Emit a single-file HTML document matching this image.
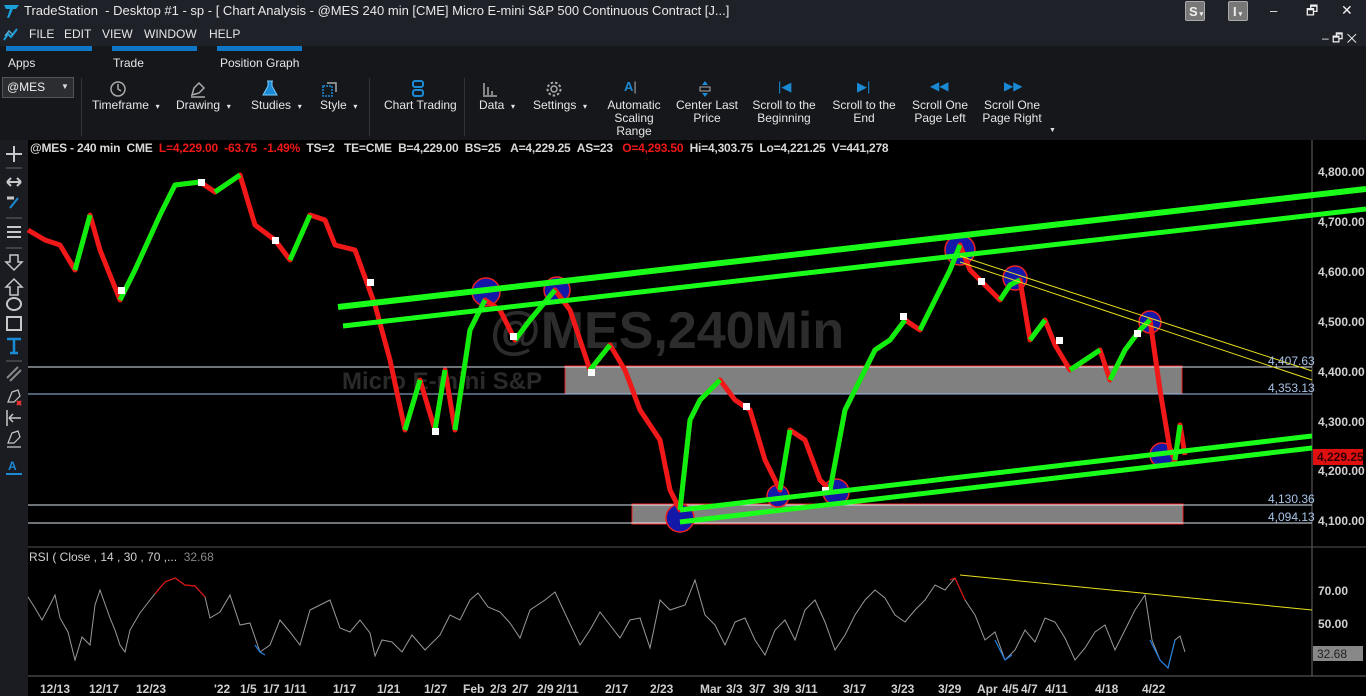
<!DOCTYPE html>
<html><head><meta charset="utf-8"><style>
*{margin:0;padding:0;box-sizing:border-box}
body{width:1366px;height:696px;overflow:hidden;background:#000;font-family:"Liberation Sans",sans-serif;position:relative;color:#ddd}
.a{position:absolute;white-space:nowrap}
#title{left:0;top:0;width:1366px;height:23px;background:#1f2129}
#menu{left:0;top:23px;width:1366px;height:23px;background:#1f2129}
#rib{left:0;top:46px;width:1366px;height:94px;background:#15171b}
.m{font-size:12px;color:#e6e6e6;top:27px}
.tab{height:5px;background:#0f78c6;top:46px}
.lbl{font-size:12px;color:#e6e6e6}
.rb{font-size:12px;color:#e6e6e6;text-align:center;line-height:13px}
.ax{font-size:12px;color:#d0d0d0;font-weight:bold;left:1318px}
.dt{font-size:12px;color:#d0d0d0;font-weight:bold;top:682px}
</style></head><body>
<div class="a" id="title"></div>
<svg class="a" style="left:2px;top:2px" width="20" height="18"><path d="M2 3 H17 L14 7 H11 L7 16 L5 16 L8 7 H4 Z" fill="#1aa0d8"/></svg>
<div class="a" style="left:24px;top:3px;font-size:13px;color:#e8e8e8">TradeStation &nbsp;- Desktop #1 - sp - [ Chart Analysis - @MES 240 min [CME] Micro E-mini S&amp;P 500 Continuous Contract [J...]</div>
<div class="a" style="left:1185px;top:1px;width:20px;height:20px;background:#777;border:1px solid #aaa;border-radius:2px;font-size:13px;font-weight:bold;color:#eee;padding:2px 0 0 3px">S<span style="font-size:7px"> ▾</span></div>
<div class="a" style="left:1228px;top:1px;width:20px;height:20px;background:#777;border:1px solid #aaa;border-radius:2px;font-size:13px;font-weight:bold;color:#eee;padding:2px 0 0 4px">I<span style="font-size:7px"> ▾</span></div>
<div class="a" style="left:1270px;top:3px;font-size:13px;color:#eee">‒</div>
<div class="a" style="left:1306px;top:2px;font-size:13px;color:#eee">🗗</div>
<div class="a" style="left:1341px;top:2px;font-size:14px;color:#eee">✕</div>
<div class="a" id="menu"></div>
<svg class="a" style="left:3px;top:26px" width="16" height="16"><path d="M1 14 L5 8 L8 11 L14 3" stroke="#1aa0d8" stroke-width="2" fill="none"/><path d="M2 10 L6 5 L10 9" stroke="#5ac" stroke-width="1.5" fill="none"/></svg>
<div class="a m" style="left:29px">FILE</div><div class="a m" style="left:64px">EDIT</div><div class="a m" style="left:102px">VIEW</div><div class="a m" style="left:144px">WINDOW</div><div class="a m" style="left:209px">HELP</div>
<div class="a" style="left:1322px;top:29px;font-size:12px;color:#eee">‒ 🗗 ✕</div>
<div class="a" id="rib"></div>
<div class="a tab" style="left:6px;width:86px"></div><div class="a tab" style="left:112px;width:85px"></div><div class="a tab" style="left:217px;width:85px"></div>
<div class="a lbl" style="left:8px;top:56px">Apps</div><div class="a lbl" style="left:113px;top:56px">Trade</div><div class="a lbl" style="left:220px;top:56px">Position Graph</div>
<div class="a" style="left:2px;top:77px;width:72px;height:21px;background:#2b2d31;border:1px solid #555;font-size:12px;color:#eee;padding:2px 4px">@MES</div>
<div class="a" style="left:61px;top:82px;font-size:8px;color:#ddd">▼</div>
<div class="a" style="left:81px;top:78px;width:1px;height:58px;background:#333"></div>
<div class="a" style="left:369px;top:78px;width:1px;height:58px;background:#333"></div>
<div class="a" style="left:464px;top:78px;width:1px;height:58px;background:#333"></div>
<svg class="a" style="left:109px;top:80px" width="18" height="18"><circle cx="9" cy="9" r="7" stroke="#aaa" stroke-width="1.5" fill="none"/><path d="M9 4V9L12 11" stroke="#aaa" stroke-width="1.5" fill="none"/></svg>
<svg class="a" style="left:189px;top:80px" width="18" height="18"><path d="M3 15 L5 8 L10 3 L15 8 L10 13Z M2 17H16" stroke="#aaa" stroke-width="1.5" fill="none"/></svg>
<svg class="a" style="left:261px;top:79px" width="18" height="18"><path d="M6 2H12M7 2V7L2 16H16L11 7V2" stroke="#7cf" stroke-width="1" fill="#1a8ad4"/></svg>
<svg class="a" style="left:321px;top:80px" width="18" height="18"><rect x="2" y="6" width="9" height="10" stroke="#1a8ad4" stroke-width="1.5" fill="none" stroke-dasharray="2 1"/><path d="M6 3H15V12" stroke="#aaa" stroke-width="1.5" fill="none"/></svg>
<svg class="a" style="left:411px;top:79px" width="14" height="20"><rect x="2" y="2" width="10" height="6" rx="2" stroke="#1a8ad4" stroke-width="2" fill="none"/><rect x="2" y="11" width="10" height="6" rx="2" stroke="#1a8ad4" stroke-width="2" fill="none"/></svg>
<svg class="a" style="left:481px;top:80px" width="18" height="18"><path d="M3 3V15M7 7V15M11 11V15M2 16H16" stroke="#aaa" stroke-width="1.5"/></svg>
<svg class="a" style="left:545px;top:80px" width="18" height="18"><circle cx="9" cy="9" r="3" stroke="#aaa" stroke-width="1.5" fill="none"/><circle cx="9" cy="9" r="6.5" stroke="#aaa" stroke-width="2" fill="none" stroke-dasharray="2.5 2"/></svg>
<div class="a" style="left:624px;top:79px;font-size:13px;font-weight:bold;color:#1a8ad4">A<span style="color:#aaa;font-weight:normal">|</span></div>
<svg class="a" style="left:698px;top:80px" width="14" height="18"><path d="M7 1L4 5H10Z M7 17L4 13H10Z" fill="#1a8ad4"/><rect x="2" y="7" width="10" height="4" stroke="#aaa" fill="none"/></svg>
<div class="a" style="left:778px;top:79px;font-size:13px;color:#1a8ad4">|◀</div>
<div class="a" style="left:857px;top:79px;font-size:13px;color:#1a8ad4">▶|</div>
<div class="a" style="left:930px;top:79px;font-size:12px;color:#1a8ad4">◀◀</div>
<div class="a" style="left:1004px;top:79px;font-size:12px;color:#1a8ad4">▶▶</div>
<div class="a rb" style="left:92px;top:99px">Timeframe &nbsp;<span style="font-size:8px">▾</span></div>
<div class="a rb" style="left:176px;top:99px">Drawing &nbsp;<span style="font-size:8px">▾</span></div>
<div class="a rb" style="left:251px;top:99px">Studies &nbsp;<span style="font-size:8px">▾</span></div>
<div class="a rb" style="left:320px;top:99px">Style &nbsp;<span style="font-size:8px">▾</span></div>
<div class="a rb" style="left:384px;top:99px">Chart Trading</div>
<div class="a rb" style="left:479px;top:99px">Data &nbsp;<span style="font-size:8px">▾</span></div>
<div class="a rb" style="left:533px;top:99px">Settings &nbsp;<span style="font-size:8px">▾</span></div>
<div class="a rb" style="left:605px;top:99px;width:58px">Automatic<br>Scaling<br>Range</div>
<div class="a rb" style="left:674px;top:99px;width:66px">Center Last<br>Price</div>
<div class="a rb" style="left:750px;top:99px;width:68px">Scroll to the<br>Beginning</div>
<div class="a rb" style="left:830px;top:99px;width:68px">Scroll to the<br>End</div>
<div class="a rb" style="left:909px;top:99px;width:62px">Scroll One<br>Page Left</div>
<div class="a rb" style="left:981px;top:99px;width:62px">Scroll One<br>Page Right</div>
<div class="a" style="left:1049px;top:127px;font-size:7px;color:#ddd">▼</div>

<!-- left toolbar -->
<div class="a" style="left:0;top:140px;width:28px;height:556px;background:#1a1c21"></div>
<svg class="a" style="left:0;top:140px" width="28" height="340">
<g stroke="#c8c8c8" stroke-width="2" fill="none">
<path d="M14 6V22M6 14H22"/>
<path d="M6 28H22M6 78H22M6 108H22M6 221H22" stroke="#666" stroke-width="1"/>
<path d="M7 42H21M7 42L11 38M7 42L11 46M21 42L17 38M21 42L17 46"/>
<path d="M7 58H14" stroke-width="3"/>
<path d="M18 58L10 68" stroke="#1a8ad4"/>
<path d="M7 87H21M7 92H21M7 97H21"/>
<path d="M10 115V122H6L14 130L22 122H18V115Z" stroke-width="1.5"/>
<path d="M10 155V147H6L14 139L22 147H18V155Z" stroke-width="1.5"/>
<ellipse cx="14" cy="164" rx="7" ry="6"/>
<rect x="7" y="177" width="14" height="13"/>
<path d="M7 199H21M14 199V213M10 213H18" stroke="#1a8ad4" stroke-width="2.5"/>
<path d="M7 238L18 227M10 241L21 230" stroke="#888"/>
<path d="M8 262L12 252L18 250L20 256L14 262Z" stroke-width="1.2"/>
<path d="M17 261L21 265M21 261L17 265" stroke="#e33"/>
<path d="M7 270V286M9 278H21M9 278L13 274M9 278L13 282" stroke-width="1.5"/>
<path d="M8 303L12 293L18 291L20 297L14 303ZM7 307H21" stroke-width="1.2"/>
<path d="M6 334H22" stroke="#1a8ad4"/>
</g>
<text x="8" y="330" font-size="12" font-weight="bold" fill="#1a8ad4" font-family="Liberation Sans">A</text>
</svg>

<!-- chart -->
<svg class="a" style="left:0;top:0" width="1366" height="696">
<g font-family="Liberation Sans" font-weight="bold" font-size="52">
<text x="490" y="348" fill="#2c2c2c">@MES,240Min</text>
<text x="342" y="389" fill="#2a2a2a" font-size="24">Micro E-mini S&amp;P</text>
</g>
<line x1="1312" y1="140" x2="1312" y2="676" stroke="#666"/>
<line x1="28" y1="547" x2="1366" y2="547" stroke="#555"/>
<line x1="28" y1="676" x2="1366" y2="676" stroke="#666"/>
<rect x="565" y="366" width="617" height="28" fill="#808080" stroke="#e22"/>
<rect x="632" y="504" width="551" height="20" fill="#808080" stroke="#e22"/>
<line x1="28" y1="367" x2="1312" y2="367" stroke="#dce6f0"/>
<line x1="28" y1="394" x2="1312" y2="394" stroke="#a0c0e8"/>
<line x1="28" y1="505" x2="1312" y2="505" stroke="#dce6f0"/>
<line x1="28" y1="523" x2="1312" y2="523" stroke="#dce6f0"/>
<g fill="#1418a8" stroke="#e22" stroke-width="1.5">
<circle cx="486" cy="292" r="14"/><circle cx="557" cy="290" r="13"/><circle cx="960" cy="250" r="15"/><circle cx="1015" cy="278" r="12"/><circle cx="1150" cy="322" r="11"/><circle cx="680" cy="518" r="14"/><circle cx="778" cy="496" r="11"/><circle cx="836" cy="492" r="13"/><circle cx="1162" cy="455" r="12"/>
</g>
<g fill="none" stroke-width="5" stroke-linejoin="round">
<path stroke="#f01818" d="M28 230L45 240L60 245L75 270L90 215L100 250L120 300L135 270L160 215L175 185L200 182L215 192L240 175L255 225L275 240L290 260L310 215L325 220L335 245L355 250L375 305L390 360L405 430L420 380L435 430L445 370L455 430L470 330L485 300L500 310L515 340L530 320L555 290L570 310L590 370L610 345L625 370L640 410L660 440L670 490L680 510L690 420L700 400L710 390L720 380L735 400L750 410L765 460L780 490L790 430L805 440L820 480L830 490L845 410L860 380L875 350L890 340L905 320L920 330L935 300L950 270L960 245L970 270L985 285L1000 300L1010 285L1020 280L1030 340L1045 320L1055 345L1070 370L1085 360L1100 350L1110 380L1125 350L1140 330L1150 320L1160 390L1170 450L1175 460L1180 425L1185 455"/>
<path stroke="#10ee10" d="M75 270L90 215M120 300L135 270L160 215L175 185L200 182M215 192L240 175M290 260L310 215M405 430L420 380M435 430L445 370M455 430L470 330L485 300M515 340L530 320L555 290M590 370L610 345M680 510L690 420L700 400L710 390L720 380M780 490L790 430M830 490L845 410L860 380L875 350L890 340L905 320M920 330L935 300L950 270L960 245M1000 300L1010 285L1020 280M1030 340L1045 320M1070 370L1085 360L1100 350M1110 380L1125 350L1140 330L1150 320M1175 460L1180 425"/>
</g>
<g fill="#fff"><rect x="118" y="287" width="7" height="7"/><rect x="198" y="179" width="7" height="7"/><rect x="367" y="279" width="7" height="7"/><rect x="272" y="237" width="7" height="7"/><rect x="432" y="428" width="7" height="7"/><rect x="510" y="333" width="7" height="7"/><rect x="588" y="369" width="7" height="7"/><rect x="743" y="403" width="7" height="7"/><rect x="822" y="487" width="7" height="7"/><rect x="900" y="313" width="7" height="7"/><rect x="978" y="278" width="7" height="7"/><rect x="1056" y="337" width="7" height="7"/><rect x="1134" y="330" width="7" height="7"/></g>
<line x1="338" y1="307" x2="1366" y2="189" stroke="#1aff1a" stroke-width="6"/>
<line x1="343" y1="326" x2="1366" y2="209" stroke="#1aff1a" stroke-width="5"/>
<line x1="680" y1="510" x2="1312" y2="436" stroke="#1aff1a" stroke-width="5"/>
<line x1="680" y1="522" x2="1312" y2="448" stroke="#1aff1a" stroke-width="5"/>
<line x1="960" y1="256" x2="1312" y2="371" stroke="#e8e020" stroke-width="1"/>
<line x1="960" y1="262" x2="1312" y2="380" stroke="#e8e020" stroke-width="1"/>
<line x1="960" y1="575" x2="1312" y2="610" stroke="#e8e020" stroke-width="1"/>
<polyline fill="none" stroke="#999" stroke-width="1" points="28,597 35,608 42,620 50,605 55,595 60,618 68,632 75,660 82,637 90,645 95,605 100,590 110,618 115,630 120,645 125,652 130,630 140,613 150,600 158,590 165,582 175,578 185,585 195,586 205,597 210,618 220,612 230,595 240,625 250,623 260,652 270,645 280,620 290,632 300,645 310,610 320,605 330,600 340,628 350,632 360,620 370,633 375,656 382,640 392,642 402,652 412,635 425,650 440,635 450,615 460,620 470,600 478,593 488,607 500,612 510,623 520,638 530,610 545,600 555,592 570,624 580,645 590,630 600,612 610,625 620,638 630,620 640,618 650,648 660,600 670,610 685,605 695,580 705,615 715,625 725,645 735,622 745,618 755,640 765,655 775,630 785,620 795,640 805,610 815,600 825,622 835,650 845,635 855,615 865,600 875,590 885,598 895,615 905,622 915,610 925,600 935,585 945,590 955,578 965,600 975,615 985,640 995,632 1005,660 1015,650 1025,630 1035,642 1045,618 1055,622 1065,638 1075,660 1085,648 1095,632 1105,625 1115,650 1125,630 1135,610 1145,595 1152,640 1160,660 1168,668 1175,640 1180,636 1185,652"/>
<polyline fill="none" stroke="#e01010" stroke-width="1.2" points="155,594 165,582 175,578 185,585 195,586 205,597"/>
<polyline fill="none" stroke="#e01010" stroke-width="1.2" points="950,580 955,578 965,600"/>
<polyline fill="none" stroke="#2080e0" stroke-width="1.2" points="255,645 260,652 265,655"/>
<polyline fill="none" stroke="#2080e0" stroke-width="1.2" points="1150,640 1160,660 1168,668 1175,640"/>
<polyline fill="none" stroke="#2080e0" stroke-width="1.2" points="995,640 1005,660 1012,655"/>
</svg>

<div class="a" style="left:30px;top:141px;font-size:12px;font-weight:bold;color:#d8d8d8;letter-spacing:-0.2px">@MES - 240 min &nbsp;CME &nbsp;<span style="color:#f01818">L=4,229.00 &nbsp;-63.75 &nbsp;-1.49%</span> &nbsp;TS=2 &nbsp;&nbsp;TE=CME &nbsp;B=4,229.00 &nbsp;BS=25 &nbsp;&nbsp;A=4,229.25 &nbsp;AS=23 &nbsp;&nbsp;<span style="color:#f01818">O=4,293.50</span> &nbsp;Hi=4,303.75 &nbsp;Lo=4,221.25 &nbsp;V=441,278</div>
<div class="a" style="left:29px;top:550px;font-size:12px;color:#d0d0d0">RSI ( Close , 14 , 30 , 70 ,... &nbsp;<span style="color:#888">32.68</span></div>

<div class="a ax" style="top:165px">4,800.00</div>
<div class="a ax" style="top:215px">4,700.00</div>
<div class="a ax" style="top:265px">4,600.00</div>
<div class="a ax" style="top:315px">4,500.00</div>
<div class="a ax" style="top:365px">4,400.00</div>
<div class="a ax" style="top:415px">4,300.00</div>
<div class="a ax" style="top:464px">4,200.00</div>
<div class="a ax" style="top:514px">4,100.00</div>
<div class="a ax" style="top:584px">70.00</div>
<div class="a ax" style="top:617px">50.00</div>
<div class="a" style="left:1313px;top:449px;width:50px;height:16px;background:#e01010;font-size:12px;color:#300;font-weight:bold;padding:1px 0 0 4px">4,229.25</div>
<div class="a" style="left:1313px;top:646px;width:50px;height:15px;background:#888;font-size:12px;color:#222;padding:1px 0 0 4px">32.68</div>
<div class="a" style="left:1268px;top:354px;font-size:12px;color:#a8c4e8">4,407.63</div>
<div class="a" style="left:1268px;top:381px;font-size:12px;color:#a8c4e8">4,353.13</div>
<div class="a" style="left:1268px;top:492px;font-size:12px;color:#a8c4e8">4,130.36</div>
<div class="a" style="left:1268px;top:510px;font-size:12px;color:#a8c4e8">4,094.13</div>

<div class="a dt" style="left:40px">12/13</div><div class="a dt" style="left:89px">12/17</div><div class="a dt" style="left:136px">12/23</div>
<div class="a dt" style="left:214px">'22</div><div class="a dt" style="left:240px">1/5</div><div class="a dt" style="left:263px">1/7</div><div class="a dt" style="left:284px">1/11</div>
<div class="a dt" style="left:333px">1/17</div><div class="a dt" style="left:377px">1/21</div><div class="a dt" style="left:424px">1/27</div>
<div class="a dt" style="left:463px">Feb</div><div class="a dt" style="left:490px">2/3</div><div class="a dt" style="left:512px">2/7</div><div class="a dt" style="left:537px">2/9</div><div class="a dt" style="left:556px">2/11</div>
<div class="a dt" style="left:605px">2/17</div><div class="a dt" style="left:650px">2/23</div>
<div class="a dt" style="left:700px">Mar</div><div class="a dt" style="left:726px">3/3</div><div class="a dt" style="left:749px">3/7</div><div class="a dt" style="left:773px">3/9</div><div class="a dt" style="left:795px">3/11</div>
<div class="a dt" style="left:843px">3/17</div><div class="a dt" style="left:891px">3/23</div><div class="a dt" style="left:938px">3/29</div>
<div class="a dt" style="left:977px">Apr</div><div class="a dt" style="left:1002px">4/5</div><div class="a dt" style="left:1021px">4/7</div><div class="a dt" style="left:1045px">4/11</div>
<div class="a dt" style="left:1095px">4/18</div><div class="a dt" style="left:1142px">4/22</div>
</body></html>
